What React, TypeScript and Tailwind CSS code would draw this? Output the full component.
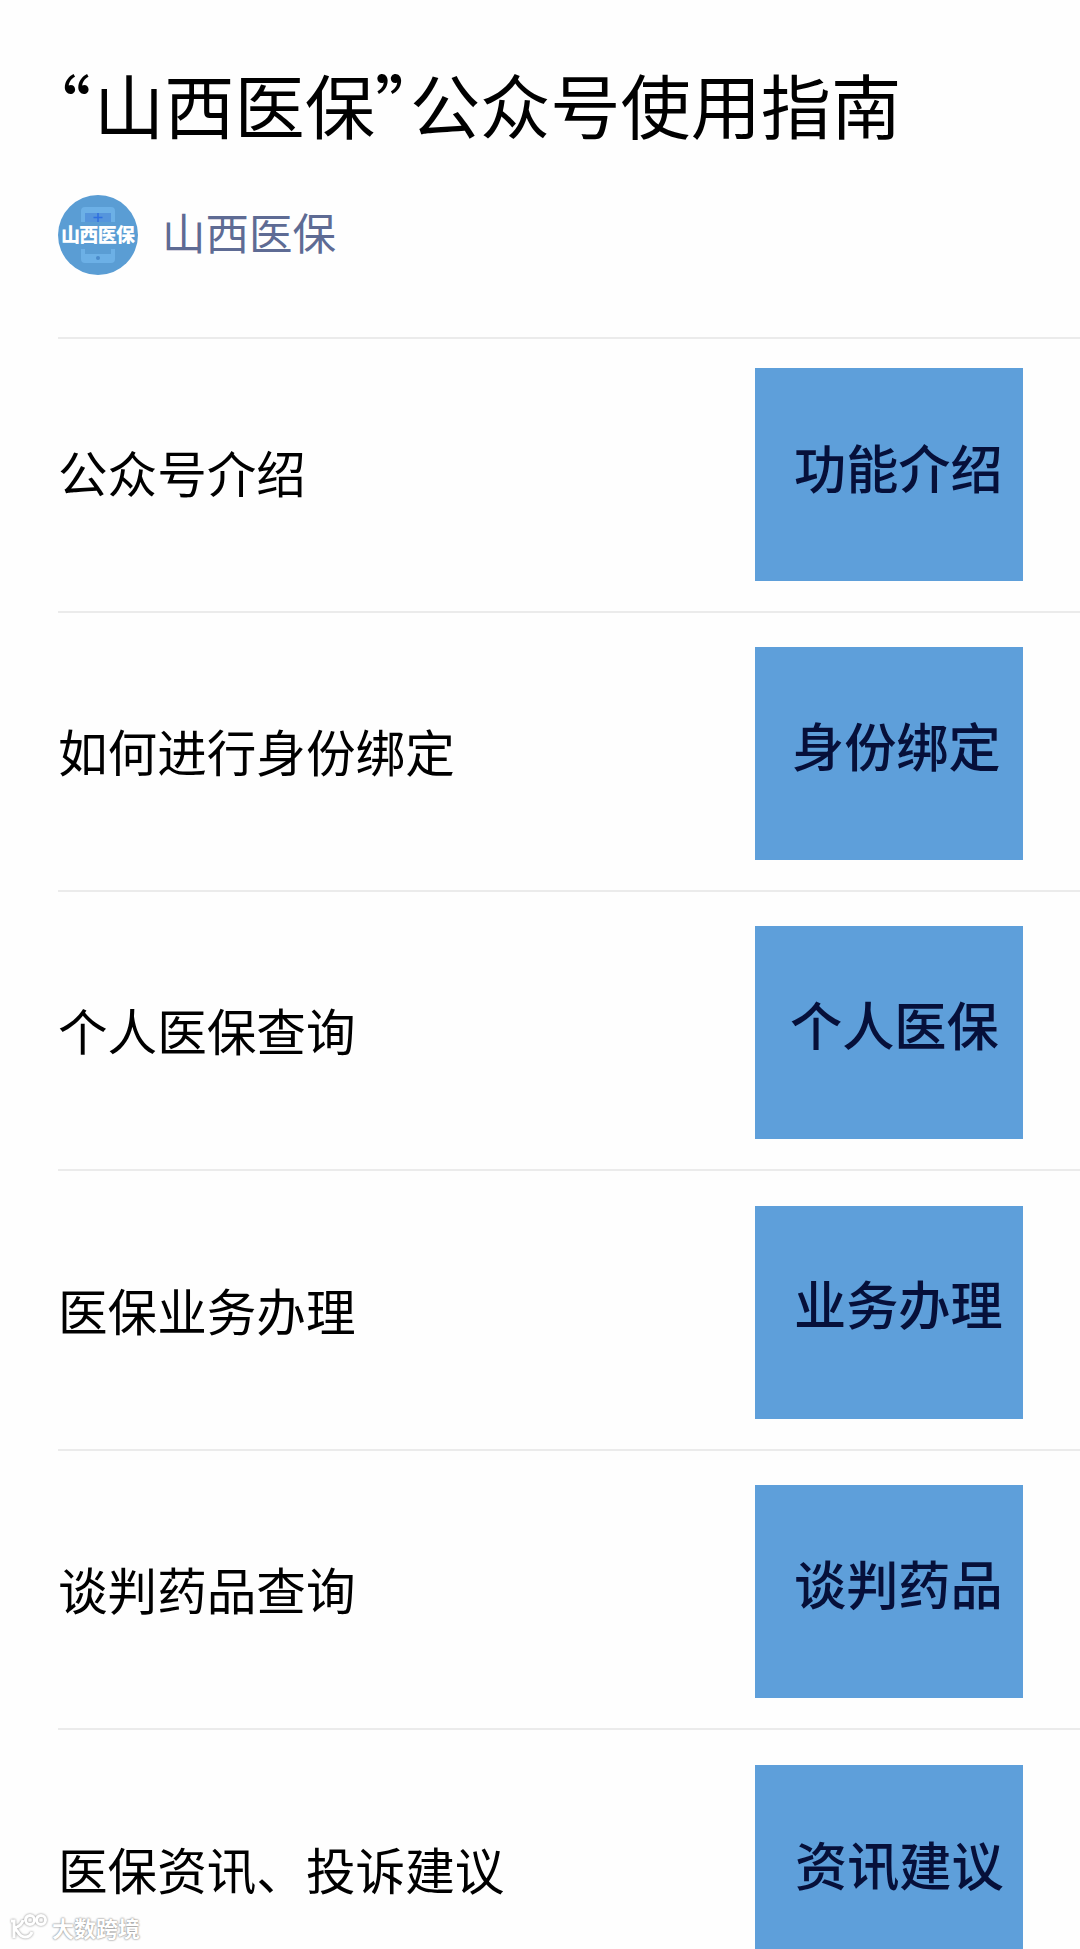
import React from 'react';

// ─── Dados ────────────────────────────────────────────────────────────────────

interface GuideItem {
    title: string;  // Texto à esquerda
    cover: string;  // Texto dentro da capa azul
    nudge: string;  // Ajuste fino do texto da capa
}

const ITEMS: GuideItem[] = [
    { title: '公众号介绍', cover: '功能介绍', nudge: 'pl-[39px] pt-[62px]' },
    { title: '如何进行身份绑定', cover: '身份绑定', nudge: 'pl-[37px] pt-[61px]' },
    { title: '个人医保查询', cover: '个人医保', nudge: 'pl-[35px] pt-[61px]' },
    { title: '医保业务办理', cover: '业务办理', nudge: 'pl-[39px] pt-[60px]' },
    { title: '谈判药品查询', cover: '谈判药品', nudge: 'pl-[39px] pt-[61px]' },
    { title: '医保资讯、投诉建议', cover: '资讯建议', nudge: 'pl-[40px] pt-[62px]' },
];

// ─── Avatar ───────────────────────────────────────────────────────────────────

const Avatar: React.FC = () => (
    <svg viewBox="0 0 80 80" className="size-20 shrink-0">
        <circle cx="40" cy="40" r="40" fill="#5a9dd4" />
        {/* Celular atrás do nome */}
        <path d="M23 27V16q0-4 4-4h26q4 0 4 4v11h-4V18H27v9z" fill="#6cb0e6" />
        <path d="M23 54h4v5h26v-5h4v10q0 4-4 4H27q-4 0-4-4z" fill="#6cb0e6" />
        <path d="M27 18h26v9H27z" fill="#5595dc" />
        <path d="M40 18v9M35.500 22.500h9" stroke="#2f6fe0" strokeWidth="1.500" />
        <circle cx="40" cy="63" r="2" fill="#4b8bcb" />
        <text
            x="40"
            y="47"
            textAnchor="middle"
            fontSize="19"
            fontWeight="900"
            fill="#fff"
            textLength="74"
        >
            山西医保
        </text>
    </svg>
);

// ─── Marca d'água ─────────────────────────────────────────────────────────────

const Watermark: React.FC = () => (
    <div className="absolute left-[9px] top-[1912px] flex items-center">
        <svg viewBox="0 0 40 30" className="h-[30px] w-10 overflow-visible drop-shadow-[0_0_1px_#888]" fill="none" stroke="#fff" strokeWidth="3">
            <path d="M2 9h3v17M14 8C13 13 9 15 5 16c4 1 4 9 11 9 4 0 6-2 7-5" />
            <circle cx="21" cy="8" r="4.500" />
            <circle cx="32" cy="8" r="4.500" />
        </svg>
        <span className="ml-[3px] text-[22px] leading-[30px] font-bold text-white [text-shadow:0_0_2px_#888,0_0_2px_#aaa]">
            大数跨境
        </span>
    </div>
);

// ─── Linha da lista ───────────────────────────────────────────────────────────

const GuideRow: React.FC<{ item: GuideItem }> = ({ item }) => (
    <li className="flex h-[279.400px] shrink-0 items-start justify-between border-t-2 border-[#ebebeb] pr-[57.500px] pt-[34.600px] first:h-[273.500px] first:pt-[29px]">
        <span className="pt-[67px] text-[49.600px] leading-[72px] text-black">{item.title}</span>
        <div className={`h-[213px] w-[267.500px] bg-[#5e9fda] ${item.nudge}`}>
            <span className="block whitespace-nowrap text-[52.200px] leading-[72px] font-medium text-[#06103a]">
                {item.cover}
            </span>
        </div>
    </li>
);

// ─── Página ───────────────────────────────────────────────────────────────────

const App: React.FC = () => (
    <div
        lang="zh-CN"
        className="relative h-[1949px] w-[1080px] overflow-hidden bg-[#fefefe] pl-[58px] font-['Noto_Sans_CJK_SC',sans-serif]"
    >
        {/* halt: aspas com meia largura */}
        <h1 className="pt-[54px] text-[70.200px] leading-[100px] whitespace-nowrap text-black [font-feature-settings:'halt']">
            <span className="-ml-[2px] mr-[3px]">“</span>山西医保”公众号使用指南
        </h1>

        <div className="mt-[41px] flex items-center gap-[24px]">
            <Avatar />
            <span className="-mt-[6px] text-[43.500px] leading-[80px] text-[#5e6b94]">山西医保</span>
        </div>

        <ul className="mt-[62px] flex flex-col">
            {ITEMS.map((item) => (
                <GuideRow key={item.title} item={item} />
            ))}
        </ul>

        <Watermark />
    </div>
);

export default App;
